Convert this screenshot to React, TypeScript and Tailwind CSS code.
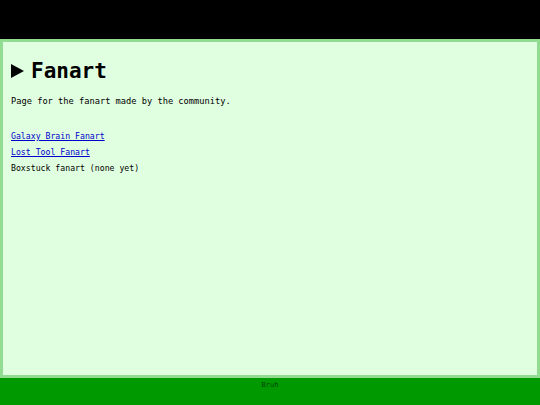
import React from "react";

export default function App() {
  const mono = { fontFamily: '"DejaVu Sans Mono", "Liberation Mono", monospace' };
  return (
    <div className="flex h-[405px] w-[540px] flex-col overflow-hidden" style={mono}>
      <div className="h-[39px] shrink-0 bg-black" />
      <main className="flex-1 border-[3px] border-[#92dc92] bg-[#e0ffe0] px-[8px] pt-[17px] text-black">
        <h1 className="flex items-center gap-[7px] text-[21px] font-bold leading-[24px]">
          <svg width="13" height="14" viewBox="0 0 13 14" className="shrink-0">
            <polygon points="0,0 13,7 0,14" fill="#000" />
          </svg>
          <span>Fanart</span>
        </h1>
        <p className="mt-[12px] text-[8.7px] leading-[12px]">Page for the fanart made by the community.</p>
        <div className="mt-[21px] flex flex-col text-[8.2px] leading-[16px]">
          <a href="#" className="w-fit text-[#0000cc] underline">Galaxy Brain Fanart</a>
          <a href="#" className="w-fit text-[#0000cc] underline">Lost Tool Fanart</a>
          <span>Boxstuck fanart (none yet)</span>
        </div>
      </main>
      <footer className="flex h-[27px] shrink-0 justify-center bg-[#009a00] pt-[3px] text-[7px] leading-[9px] text-[#004400]">
        Bruh
      </footer>
    </div>
  );
}
